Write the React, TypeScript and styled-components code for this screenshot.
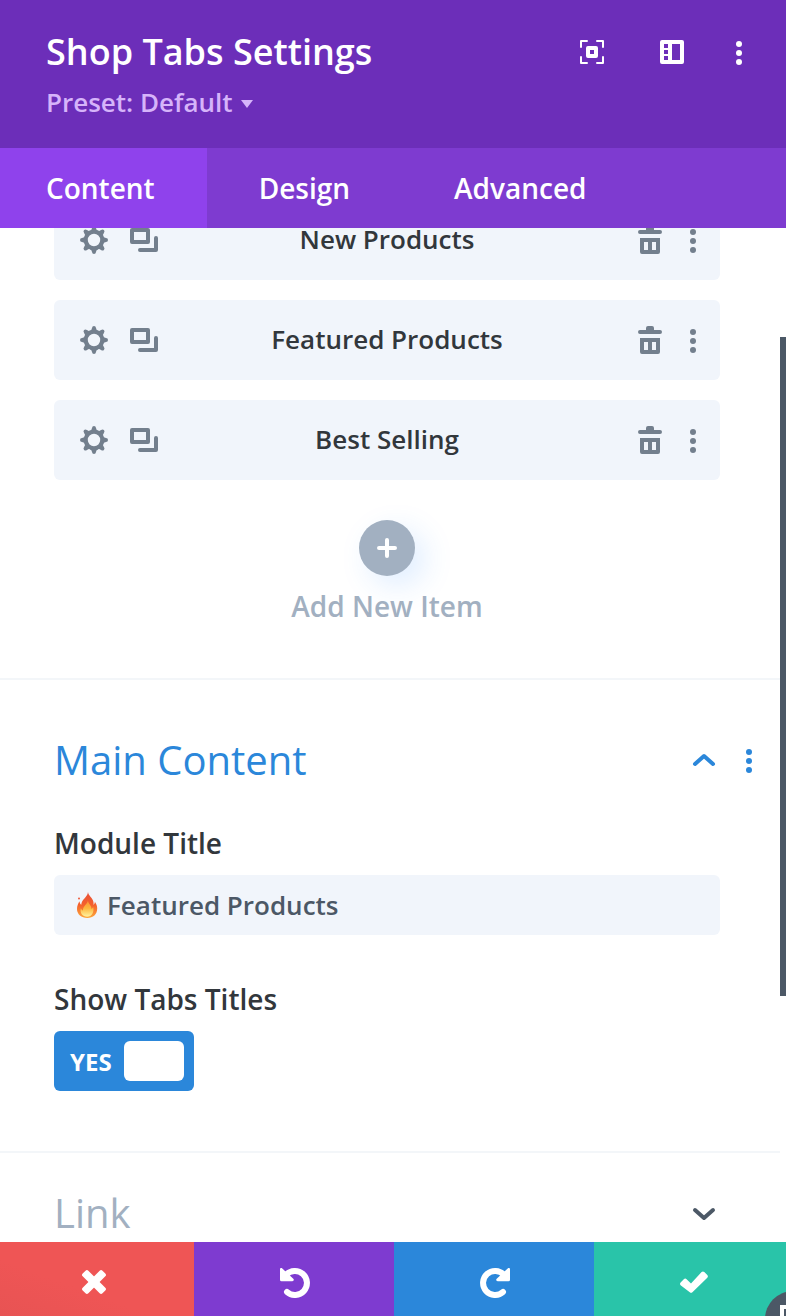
import React, { useState } from "react";
import styled, { createGlobalStyle, css } from "styled-components";

const GlobalStyle = createGlobalStyle`
  *, *::before, *::after { box-sizing: border-box; }
  html, body { margin: 0; background: #ffffff; }
  body, button, input { font-family: "Open Sans", "Noto Sans", sans-serif; }
  button { border: 0; padding: 0; background: none; cursor: pointer; }
  h1, h2, p { margin: 0; }
  svg { display: block; flex: none; }
`;

const Panel = styled.main`
  position: relative;
  display: flex;
  flex-direction: column;
  height: 100vh;
  overflow: hidden;
`;

const Header = styled.header`
  display: flex;
  flex: none;
  justify-content: space-between;
  align-items: flex-start;
  height: 148px;
  padding: 28px 40px 0 46px;
  background: #6c2eb9;
`;

const Title = styled.h1`
  color: #ffffff;
  font-size: 36px;
  line-height: 48px;
  font-weight: 600;
`;

const PresetButton = styled.button`
  display: flex;
  align-items: center;
  gap: 8px;
  margin-top: 8px;
  color: #d6b4fa;
  font-size: 26px;
  line-height: 36px;
  font-weight: 600;
`;

const HeaderActions = styled.div`
  display: flex;
  align-items: center;
  gap: 40px;
  height: 48px;
`;

const IconButton = styled.button`
  display: flex;
  color: inherit;
`;

const HeaderIcon = styled(IconButton)<{ $narrow?: boolean }>`
  justify-content: center;
  width: ${(p) => (p.$narrow ? 14 : 40)}px;
  color: #ffffff;
`;

const Tabs = styled.nav`
  display: flex;
  flex: none;
  height: 80px;
  background: #7e3bd0;
`;

const Tab = styled.button<{ $active?: boolean }>`
  padding: 0 52px;
  color: #ffffff;
  font-size: 28px;
  line-height: 40px;
  font-weight: 600;
  ${(p) => p.$active && css`
    padding-left: 46px;
    background: #8f42ec;
  `}
`;

const Body = styled.div`
  display: flex;
  flex: 1;
  min-height: 0;
  overflow: hidden;
`;

const Content = styled.div`
  flex: 1;
  min-width: 0;
`;

const ScrollTrack = styled.div`
  flex: none;
  width: 6px;
  height: 100%;
`;

const ScrollThumb = styled.div`
  height: 65%;
  background: #4c5866;
`;

const ScrollOffset = styled.div`
  height: 109px;
`;

const Items = styled.section`
  display: flex;
  flex-direction: column;
  gap: 20px;
  margin-top: -28px;
  padding: 0 60px 54px 54px;
  border-bottom: 2px solid #f3f6f9;
`;

const ItemRow = styled.div`
  display: grid;
  grid-template-columns: 1fr auto 1fr;
  align-items: center;
  height: 80px;
  padding: 0 24px;
  border-radius: 6px;
  background: #f1f5fb;
  color: #737f8d;
`;

const ItemActions = styled.div<{ $end?: boolean }>`
  display: flex;
  align-items: center;
  gap: ${(p) => (p.$end ? 28 : 22)}px;
  justify-content: ${(p) => (p.$end ? "flex-end" : "flex-start")};
  padding-left: 2px;
`;

const ItemName = styled.span`
  padding-bottom: 2px;
  color: #32373c;
  font-size: 26px;
  line-height: 36px;
  font-weight: 600;
`;

const AddItem = styled.button`
  display: flex;
  flex-direction: column;
  align-items: center;
  align-self: center;
  gap: 12px;
  margin-top: 20px;
  color: #a2b0c1;
  font-size: 28px;
  line-height: 36px;
  font-weight: 600;
`;

const AddCircle = styled.span`
  display: flex;
  align-items: center;
  justify-content: center;
  width: 56px;
  height: 56px;
  border-radius: 50%;
  background: #a2b0c1;
  color: #ffffff;
  box-shadow: 10px 10px 30px rgba(43, 135, 255, 0.15);
`;

const Group = styled.section`
  padding: 51px 60px 60px 54px;
  border-bottom: 2px solid #f3f6f9;
`;

const LinkGroup = styled.section`
  padding: 31px 60px 32px 54px;
`;

const GroupHead = styled.div`
  display: flex;
  align-items: center;
  justify-content: space-between;
  margin-right: -32px;
  height: 58px;
  color: #2b87da;
`;

const LinkHead = styled(GroupHead)`
  margin-right: 4px;
  color: #4c5866;
`;

const GroupTitle = styled.h2<{ $muted?: boolean }>`
  color: ${(p) => (p.$muted ? "#a2b0c1" : "#2b87da")};
  font-size: 40px;
  line-height: 58px;
  font-weight: 400;
`;

const GroupActions = styled.div`
  display: flex;
  align-items: center;
  gap: 30px;
`;

const FieldList = styled.div`
  display: grid;
  gap: 44px;
  margin-top: 34px;
`;

const Field = styled.div`
  display: flex;
  flex-direction: column;
  align-items: flex-start;
  gap: 12px;
`;

const Label = styled.label`
  color: #32373c;
  font-size: 28px;
  line-height: 40px;
  font-weight: 600;
`;

const InputBox = styled.div`
  display: flex;
  align-items: center;
  gap: 8px;
  width: 100%;
  height: 60px;
  padding: 0 22px;
  border-radius: 6px;
  background: #f1f5fb;
`;

const TextInput = styled.input`
  flex: 1;
  min-width: 0;
  height: 60px;
  padding: 0;
  border: 0;
  outline: 0;
  background: transparent;
  color: #4c5866;
  font-size: 26px;
  font-weight: 600;
`;

const Switch = styled.label`
  display: flex;
  align-items: center;
  justify-content: space-between;
  width: 140px;
  height: 60px;
  padding: 0 10px 0 16px;
  border-radius: 6px;
  background: #2b87da;
  color: #ffffff;
  font-size: 24px;
  font-weight: 700;
  cursor: pointer;
`;

const SwitchInput = styled.input`
  appearance: none;
  width: 60px;
  height: 40px;
  margin: 0;
  border-radius: 6px;
  background: #ffffff;
`;

const Footer = styled.footer`
  display: flex;
  flex: none;
  height: 74px;
  margin: 0 -8px 0 -6px;
`;

const FooterButton = styled.button<{ $color: string }>`
  display: flex;
  flex: 1;
  align-items: center;
  justify-content: center;
  padding-top: 6px;
  background: ${(p) => p.$color};
  color: #ffffff;
`;

const HelpBubble = styled.button`
  position: absolute;
  right: -35px;
  bottom: -31px;
  display: flex;
  align-items: flex-start;
  width: 56px;
  height: 56px;
  padding: 14px 0 0 15px;
  border-radius: 50%;
  background: #4c5866;
  color: #ffffff;
`;

const Dots = () => (
  <svg width="6" height="26" viewBox="0 0 6 26" fill="currentColor">
    <circle cx="3" cy="5" r="3" />
    <circle cx="3" cy="14" r="3" />
    <circle cx="3" cy="23" r="3" />
  </svg>
);

const FocusIcon = () => (
  <svg width="24" height="24" viewBox="0 0 24 24" fill="currentColor" fillRule="evenodd">
    <path d="M8 6h8a2 2 0 0 1 2 2v8a2 2 0 0 1-2 2H8a2 2 0 0 1-2-2V8a2 2 0 0 1 2-2zm2 4v4h4v-4z" />
    <path d="M1 7V1h6M17 1h6v6M23 17v6h-6M7 23H1v-6" fill="none" stroke="currentColor" strokeWidth="2" strokeLinecap="round" strokeLinejoin="round" />
  </svg>
);

const SidebarIcon = () => (
  <svg width="24" height="24" viewBox="0 0 24 24" fill="currentColor" fillRule="evenodd">
    <path d="M2 0h20a2 2 0 0 1 2 2v20a2 2 0 0 1-2 2H2a2 2 0 0 1-2-2V2a2 2 0 0 1 2-2zm2 4v4h4V4zm0 6v4h4v-4zm0 6v4h4v-4zm8-12v16h8V4z" />
  </svg>
);

const toothAngles = [0, 45, 90, 135, 180, 225, 270, 315];

const GearIcon = () => (
  <svg width="28" height="28" viewBox="0 0 28 28" fill="currentColor">
    <circle cx="14" cy="14" r="8.300" fill="none" stroke="currentColor" strokeWidth="4.200" />
    {toothAngles.map((angle) => (
      <path key={angle} d="M10.800 5.500L12 2Q12.200 0 14 0t2 2l1.200 3.500z" transform={`rotate(${angle} 14 14)`} />
    ))}
  </svg>
);

const CopyIcon = () => (
  <svg width="28" height="24" viewBox="0 0 28 24" fill="none" stroke="currentColor" strokeWidth="4">
    <rect x="2" y="2" width="16" height="12" strokeLinejoin="round" />
    <path d="M10 22h16V10" strokeLinecap="round" strokeLinejoin="round" />
  </svg>
);

const TrashIcon = () => (
  <svg width="24" height="28" viewBox="0 0 24 28" fill="currentColor" fillRule="evenodd">
    <path d="M8 4V2a2 2 0 0 1 2-2h4a2 2 0 0 1 2 2v2h6a2 2 0 0 1 0 4H2a2 2 0 0 1 0-4z" />
    <path d="M2 12h20v14a2 2 0 0 1-2 2H4a2 2 0 0 1-2-2zm4 4v8h4v-8zm8 0v8h4v-8z" />
  </svg>
);

const PlusIcon = () => (
  <svg width="20" height="20" viewBox="0 0 20 20" fill="none" stroke="currentColor" strokeWidth="4" strokeLinecap="round">
    <path d="M10 2v16M2 10h16" />
  </svg>
);

const Chevron = ({ down }: { down?: boolean }) => (
  <svg width="24" height="16" viewBox="0 0 24 16" fill="none" stroke="currentColor" strokeWidth="4" strokeLinecap="round" strokeLinejoin="round">
    <path d={down ? "M3 5l9 8 9-8" : "M3 12l9-8 9 8"} />
  </svg>
);

const FlameIcon = () => (
  <svg width="23" height="26" viewBox="0 0 23 26">
    <defs>
      <linearGradient id="flameOuter" x1="0" y1="0" x2="0" y2="1">
        <stop offset="0" stopColor="#e8503a" />
        <stop offset="0.500" stopColor="#f4612c" />
        <stop offset="1" stopColor="#fda83a" />
      </linearGradient>
      <linearGradient id="flameInner" x1="0" y1="0" x2="0" y2="1">
        <stop offset="0" stopColor="#fb8f35" />
        <stop offset="0.500" stopColor="#fdb83e" />
        <stop offset="1" stopColor="#fff3a0" />
      </linearGradient>
    </defs>
    <path fill="url(#flameOuter)" d="M12 0c.2 3.500 4.600 5.800 5.400 9.700.3 1.300.2 2.300 0 3.100 1-.6 1.500-1.900 1.500-3 1.500 2.200 2.300 4.500 2.300 6.700 0 5.700-4 9.500-9.900 9.500S1 22.200 1 17c0-3 1.200-5.800 2.600-7.700.1 1.800.7 2.800 1.700 3.500C5.300 7.500 11.500 5.500 12 0z" />
    <circle cx="3" cy="6.500" r="1" fill="#ee5a3a" />
    <path fill="url(#flameInner)" d="M12 8c-.2 3.500 3.800 5.500 3.400 9 1-.4 1.500-1.300 1.700-2.200 1.500 5.500-1.300 9.900-5.900 9.900-4.800 0-7.500-4-6.400-8.500.6 1.300 1.300 1.900 2.200 2.200C6.800 14 11.800 12.200 12 8z" />
  </svg>
);

const CloseIcon = () => (
  <svg width="26" height="26" viewBox="0 0 26 26" fill="currentColor">
    <rect x="-1" y="9" width="28" height="8" rx="2" transform="rotate(45 13 13)" />
    <rect x="-1" y="9" width="28" height="8" rx="2" transform="rotate(-45 13 13)" />
  </svg>
);

const UndoIcon = ({ flip }: { flip?: boolean }) => (
  <svg width="32" height="32" viewBox="-2 -2 32 32">
    <g transform={flip ? "translate(30 0) scale(-1 1)" : undefined}>
      <path d="M6 7A12 12 0 1 1 7 24" fill="none" stroke="currentColor" strokeWidth="6" strokeLinecap="round" />
      <path d="M0 1.200C0 0 1.400-.4 2.300.5l11 10.200c1 1 .4 2.600-1 2.600H1.500A1.500 1.500 0 0 1 0 11.800z" fill="currentColor" />
    </g>
  </svg>
);

const CheckIcon = () => (
  <svg width="28" height="22" viewBox="0 0 28 22" fill="currentColor">
    <path d="M.6 11.400l3.200-3.200q1.400-1.200 2.800 0L11 12.500 21.600 1q1.300-1.200 2.700 0L27.300 4q1.200 1.300 0 2.700L12.400 21.200q-1.300 1.200-2.600 0L.6 14.200q-1.200-1.400 0-2.800z" />
  </svg>
);

const productTabs = ["New Products", "Featured Products", "Best Selling"];

export default function App() {
  const [moduleTitle, setModuleTitle] = useState("Featured Products");
  const [showTitles, setShowTitles] = useState(true);

  return (
    <Panel>
      <GlobalStyle />
      <Header>
        <div>
          <Title>Shop Tabs Settings</Title>
          <PresetButton type="button">
            Preset: Default
            <svg width="12" height="12" viewBox="0 0 12 12" fill="currentColor"><path d="M0 4h12l-6 8z" /></svg>
          </PresetButton>
        </div>
        <HeaderActions>
          <HeaderIcon type="button" aria-label="Focus"><FocusIcon /></HeaderIcon>
          <HeaderIcon type="button" aria-label="Dock panel"><SidebarIcon /></HeaderIcon>
          <HeaderIcon type="button" aria-label="More options" $narrow><Dots /></HeaderIcon>
        </HeaderActions>
      </Header>
      <Tabs>
        <Tab type="button" $active>Content</Tab>
        <Tab type="button">Design</Tab>
        <Tab type="button">Advanced</Tab>
      </Tabs>
      <Body>
        <Content>
          <Items>
            {productTabs.map((name) => (
              <ItemRow key={name}>
                <ItemActions>
                  <IconButton type="button" aria-label={`Edit ${name}`}><GearIcon /></IconButton>
                  <IconButton type="button" aria-label={`Duplicate ${name}`}><CopyIcon /></IconButton>
                </ItemActions>
                <ItemName>{name}</ItemName>
                <ItemActions $end>
                  <IconButton type="button" aria-label={`Delete ${name}`}><TrashIcon /></IconButton>
                  <IconButton type="button" aria-label={`More for ${name}`}><Dots /></IconButton>
                </ItemActions>
              </ItemRow>
            ))}
            <AddItem type="button">
              <AddCircle><PlusIcon /></AddCircle>
              Add New Item
            </AddItem>
          </Items>
          <Group>
            <GroupHead>
              <GroupTitle>Main Content</GroupTitle>
              <GroupActions>
                <IconButton type="button" aria-label="Collapse Main Content"><Chevron /></IconButton>
                <IconButton type="button" aria-label="Main Content options"><Dots /></IconButton>
              </GroupActions>
            </GroupHead>
            <FieldList>
              <Field>
                <Label htmlFor="module-title">Module Title</Label>
                <InputBox>
                  <FlameIcon />
                  <TextInput id="module-title" value={moduleTitle} onChange={(e) => setModuleTitle(e.target.value)} />
                </InputBox>
              </Field>
              <Field>
                <Label htmlFor="show-titles">Show Tabs Titles</Label>
                <Switch>
                  {showTitles ? "YES" : "NO"}
                  <SwitchInput id="show-titles" type="checkbox" checked={showTitles} onChange={(e) => setShowTitles(e.target.checked)} />
                </Switch>
              </Field>
            </FieldList>
          </Group>
          <LinkGroup>
            <LinkHead>
              <GroupTitle $muted>Link</GroupTitle>
              <IconButton type="button" aria-label="Expand Link"><Chevron down /></IconButton>
            </LinkHead>
          </LinkGroup>
        </Content>
        <ScrollTrack>
          <ScrollOffset />
          <ScrollThumb />
        </ScrollTrack>
      </Body>
      <Footer>
        <FooterButton type="button" $color="linear-gradient(to top right, #e75353, #ef5555 40%)" aria-label="Discard"><CloseIcon /></FooterButton>
        <FooterButton type="button" $color="#7e3bd0" aria-label="Undo"><UndoIcon /></FooterButton>
        <FooterButton type="button" $color="#2b87da" aria-label="Redo"><UndoIcon flip /></FooterButton>
        <FooterButton type="button" $color="#29c4a9" aria-label="Save"><CheckIcon /></FooterButton>
      </Footer>
      <HelpBubble type="button" aria-label="Help">
        <svg width="26" height="26" viewBox="0 0 26 26" fill="none" stroke="currentColor" strokeWidth="4"><path d="M2 2h22v16H10l-8 6z" /></svg>
      </HelpBubble>
    </Panel>
  );
}
